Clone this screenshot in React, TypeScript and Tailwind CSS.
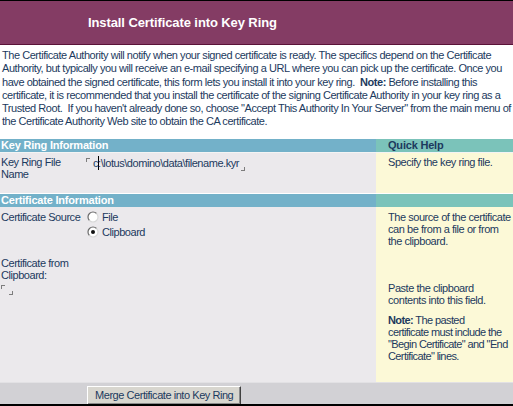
import React from "react";

// ── Install Certificate into Key Ring (Domino Web admin form) ──────────────

const FONT = { fontFamily: '"Liberation Sans", Arial, sans-serif' };

function Radio({ checked }: { checked?: boolean }) {
  return (
    <svg width="12" height="12" viewBox="0 0 12 12" className="shrink-0">
      <circle cx="6" cy="6" r="5" fill="#ffffff" />
      <path d="M2.46 9.54 A5 5 0 0 1 9.54 2.46" stroke="#6b6b6b" fill="none" strokeWidth="1.2" />
      <path d="M9.54 2.46 A5 5 0 0 1 2.46 9.54" stroke="#d8d8d8" fill="none" strokeWidth="1.2" />
      {checked && <circle cx="6" cy="6" r="2" fill="#111111" />}
    </svg>
  );
}

// Notes field delimiters ⌜ ⌟
function CornerTL() {
  return <span className="inline-block w-[4px] h-[4px] border-l border-t border-[#7d7d7d] shrink-0" />;
}
function CornerBR() {
  return <span className="inline-block w-[4px] h-[4px] border-r border-b border-[#7d7d7d] shrink-0" />;
}

function SectionBar({ left, right }: { left: string; right?: string }) {
  return (
    <div className="flex h-[13px] text-[11px] leading-[13px] font-bold tracking-[-0.2px]">
      <div className="w-[376px] bg-[#73b1c9] text-white pl-px">{left}</div>
      <div className="flex-1 bg-[#7bc3ba] text-[#1c3a5e] pl-[12px]">{right}</div>
    </div>
  );
}

export default function App() {
  return (
    <div
      className="w-[513px] h-[406px] overflow-hidden bg-white flex flex-col text-[#1c3a5e] text-[11px] tracking-[-0.45px]"
      style={FONT}
    >
      {/* ── Title bar ─────────────────────────────────────────────── */}
      <div className="h-px bg-black" />
      <div className="h-[44px] bg-[#843c64] flex items-center pl-[88px] border-b border-[#5a1238]">
        <span className="text-white text-[13px] font-bold pt-[1px] tracking-[-0.1px]">Install Certificate into Key Ring</span>
      </div>

      {/* ── Intro text ────────────────────────────────────────────── */}
      <div className="h-[94px] pt-[4px] pl-[2px] leading-[13.25px] whitespace-nowrap">
        <div>The Certificate Authority will notify when your signed certificate is ready. The specifics depend on the Certificate</div>
        <div>Authority, but typically you will receive an e-mail specifying a URL where you can pick up the certificate. Once you</div>
        <div>
          have obtained the signed certificate, this form lets you install it into your key ring.&nbsp; <b>Note:</b> Before installing this
        </div>
        <div>certificate, it is recommended that you install the certificate of the signing Certificate Authority in your key ring as a</div>
        <div>Trusted Root.&nbsp; If you haven't already done so, choose "Accept This Authority In Your Server" from the main menu of</div>
        <div>the Certificate Authority Web site to obtain the CA certificate.</div>
      </div>

      {/* ── Key Ring Information ─────────────────────────────────── */}
      <SectionBar left="Key Ring Information" right="Quick Help" />
      <div className="flex h-[41px] border-t border-[#f4f4f4] leading-[12px]">
        <div className="w-[376px] bg-[#ebe9ec] flex pt-[3px]">
          <div className="w-[86px] pl-px">Key Ring File Name</div>
          <div className="flex items-start h-[13px]">
            <span className="mt-[-4px]">
              <CornerTL />
            </span>
            <span className="ml-[3px] whitespace-nowrap">
              c<span className="inline-block w-px h-[14px] bg-black align-[-3px] -mr-px" />:\lotus\domino\data\filename.kyr
            </span>
            <span className="self-end ml-[2px] mb-[-4px]">
              <CornerBR />
            </span>
          </div>
        </div>
        <div className="flex-1 bg-[#fcf9d7] pl-[12px] pt-[3px]">Specify the key ring file.</div>
      </div>

      {/* ── Certificate Information ──────────────────────────────── */}
      <div className="h-px bg-white" />
      <SectionBar left="Certificate Information" />
      <div className="flex flex-1 leading-[12px]">
        <div className="w-[376px] bg-[#ebe9ec] flex flex-col pt-[4px] pl-px">
          <div className="flex">
            <div className="w-[86px]">Certificate Source</div>
            <div className="flex flex-col gap-[3px]">
              <label className="flex items-center gap-[3px] h-[12px]">
                <Radio />
                <span>File</span>
              </label>
              <label className="flex items-center gap-[3px] h-[12px]">
                <Radio checked />
                <span>Clipboard</span>
              </label>
            </div>
          </div>
          <div className="mt-[19px] w-[78px]">Certificate from Clipboard:</div>
          <div className="flex items-start mt-[4px] h-[12px]">
            <CornerTL />
            <span className="self-end ml-[4px]">
              <CornerBR />
            </span>
          </div>
        </div>
        <div className="flex-1 bg-[#fcf9d7] pl-[12px] pt-[4px] whitespace-nowrap">
          <p>
            The source of the certificate
            <br />
            can be from a file or from
            <br />
            the clipboard.
          </p>
          <p className="mt-[35px]">
            Paste the clipboard
            <br />
            contents into this field.
          </p>
          <p className="mt-[8px] tracking-[-0.6px]">
            <b>Note:</b> The pasted
            <br />
            certificate must include the
            <br />
            "Begin Certificate" and "End
            <br />
            Certificate" lines.
          </p>
        </div>
      </div>

      {/* ── Footer ───────────────────────────────────────────────── */}
      <div className="h-[22px] bg-[#d2d1d5] border-t border-[#e2e1e4] pl-[87px] pt-[3px]">
        <button className="h-[19px] px-[7px] bg-[#d8d6cf] text-[#1c3a5e] text-[11px] leading-[15px] border border-t-white border-l-white border-r-[#404040] border-b-[#404040] shadow-[inset_-1px_-1px_0_#8a8a8a]">
          Merge Certificate into Key Ring
        </button>
      </div>
      <div className="h-[2px] bg-black" />
    </div>
  );
}
